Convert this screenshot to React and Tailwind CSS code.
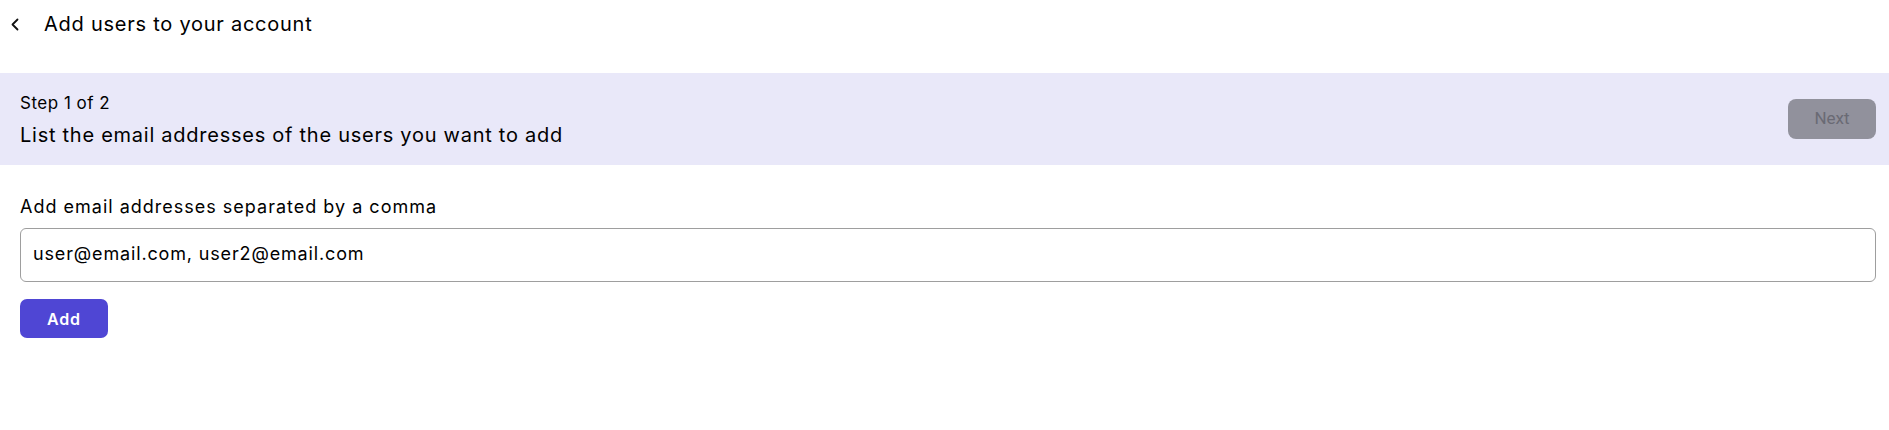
import React, { useState } from "react";

function ChevronLeft() {
  return (
    <svg width="8" height="13" viewBox="0 0 8 13" fill="none" stroke="#111" strokeWidth="1.8" strokeLinecap="round" strokeLinejoin="round">
      <path d="M6.5 1.5 L1.5 6.5 L6.5 11.5" />
    </svg>
  );
}

export default function App() {
  const [emails, setEmails] = useState("user@email.com, user2@email.com");

  return (
    <div className="min-h-screen bg-white text-black font-['Inter',sans-serif]">
      {/* Header */}
      <div className="flex items-center h-[48px] pl-[11px] mb-[25px]">
        <button className="w-[8px] h-[13px] flex items-center justify-center">
          <ChevronLeft />
        </button>
        <h1 className="ml-[25px] text-[20px] tracking-[0.75px]">Add users to your account</h1>
      </div>

      {/* Step banner */}
      <div className="bg-[#e9e8f9] h-[92px] pl-[20px] pr-[13px] flex items-center justify-between">
        <div className="flex flex-col self-start pt-[18px]">
          <span className="text-[17px] leading-[24px] tracking-[0.5px]">Step 1 of 2</span>
          <span className="text-[20px] leading-[28px] mt-[6px] tracking-[0.74px]">
            List the email addresses of the users you want to add
          </span>
        </div>
        <button
          disabled
          className="w-[88px] h-[40px] rounded-[8px] bg-[#91919c] text-[#6a6a74] text-[17px] font-['Roboto',sans-serif]"
        >
          Next
        </button>
      </div>

      {/* Form */}
      <div className="pl-[20px] pr-[13px] pt-[29px]">
        <label className="block text-[18px] leading-[26px] tracking-[1px]">
          Add email addresses separated by a comma
        </label>
        <input
          type="text"
          value={emails}
          onChange={(e) => setEmails(e.target.value)}
          className="mt-[8px] block w-full h-[54px] rounded-[6px] border border-[#9e9e9e] px-[12px] pb-[3px] text-[18px] tracking-[0.85px] outline-none"
        />
        <button className="mt-[17px] w-[88px] h-[39px] rounded-[7px] bg-[#4f46d4] text-white text-[16px] font-semibold tracking-[0.8px]">
          Add
        </button>
      </div>
    </div>
  );
}
